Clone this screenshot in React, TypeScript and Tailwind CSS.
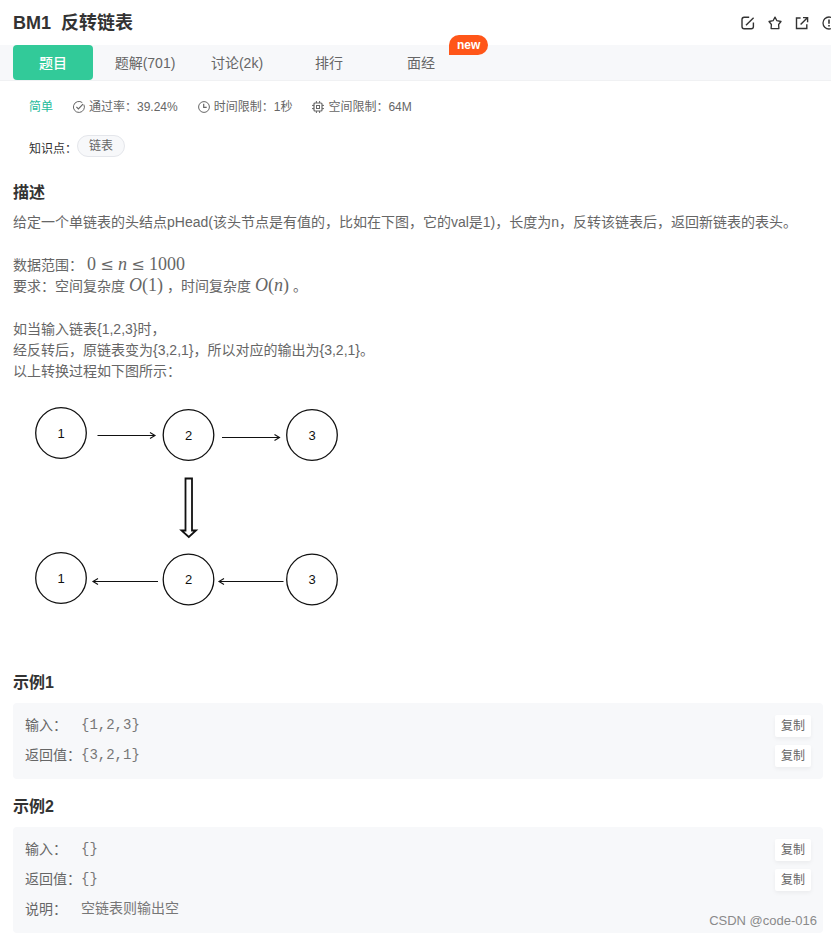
import React from "react";

interface Tab {
  label: string;
  active?: boolean;
  badge?: string;
}

interface ExampleRow {
  label: string;
  value: string;
  copy?: boolean;
}

const tabs: Tab[] = [
  { label: "题目", active: true },
  { label: "题解(701)" },
  { label: "讨论(2k)" },
  { label: "排行" },
  { label: "面经", badge: "new" },
];

const examples: { title: string; rows: ExampleRow[] }[] = [
  {
    title: "示例1",
    rows: [
      { label: "输入：", value: "{1,2,3}", copy: true },
      { label: "返回值：", value: "{3,2,1}", copy: true },
    ],
  },
  {
    title: "示例2",
    rows: [
      { label: "输入：", value: "{}", copy: true },
      { label: "返回值：", value: "{}", copy: true },
      { label: "说明：", value: "空链表则输出空" },
    ],
  },
];

const EditIcon = () => (
  <svg viewBox="0 0 14 14" className="size-3.5" fill="none" stroke="currentColor" strokeWidth="1.4">
    <path d="M8.2 1.3H3.2Q1 1.3 1 3.5v7Q1 12.7 3.2 12.7h7Q12.4 12.7 12.4 10.5V6.4" />
    <path d="M5 9.2 12.6 1.8" />
  </svg>
);

const StarIcon = () => (
  <svg viewBox="0 0 14 14" className="size-3.5" fill="none" stroke="currentColor" strokeWidth="1.3" strokeLinejoin="round">
    <path d="m7 1.1 1.9 3.6 4.1.8-2.4 3 .3 4.1H3.100l.3-4.100L1 5.500l4.100-.8z" />
  </svg>
);

const ShareIcon = () => (
  <svg viewBox="0 0 14 14" className="size-3.5" fill="none" stroke="currentColor" strokeWidth="1.4">
    <path d="M5.6 2H1.5v10.5h10.3V8.3" />
    <path d="M8 1.6h4.6v4.6M12.4 1.8 5.6 8.6" />
  </svg>
);

const AlertIcon = () => (
  <svg viewBox="0 0 14 14" className="size-3.5" fill="none" stroke="currentColor" strokeWidth="1.3">
    <circle cx="7" cy="7" r="6" />
    <path d="M7 3.4v4.4M7 9v1.5" strokeWidth="1.6" />
  </svg>
);

const CheckIcon = () => (
  <svg viewBox="0 0 12 12" className="size-3" fill="none" stroke="currentColor">
    <path d="M10.9 3.6A5.5 5.5 0 1 1 9.3 1.6" />
    <path d="m3.4 5.8 2 2L10 3.1" strokeWidth="1.2" />
  </svg>
);

const ClockIcon = () => (
  <svg viewBox="0 0 12 12" className="size-3" fill="none" stroke="currentColor">
    <circle cx="6" cy="6" r="5.4" />
    <path d="M5.7 2.8v3.6h3" strokeWidth="1.2" />
  </svg>
);

const ChipIcon = () => (
  <svg viewBox="0 0 12 12" className="size-3" fill="none" stroke="currentColor">
    <rect x="2" y="2" width="8" height="8" rx="1" strokeWidth="1.2" />
    <rect x="4.5" y="4.5" width="3" height="3" />
    <path d="M4.4 0v2M7.6 0v2M4.4 10v2M7.6 10v2M0 4.4h2M0 7.6h2M10 4.4h2M10 7.6h2" />
  </svg>
);

const nodes = [
  { x: 48, y: 51, n: 1 },
  { x: 175.5, y: 53, n: 2 },
  { x: 299, y: 53, n: 3 },
  { x: 48, y: 196, n: 1 },
  { x: 175.5, y: 197.5, n: 2 },
  { x: 299, y: 197.5, n: 3 },
];

const ListDiagram = () => (
  <svg width="340" height="273" viewBox="0 0 340 273" fill="none" stroke="#111" strokeWidth="1.3" className="block max-w-full" role="img">
    {nodes.map(({ x, y, n }, i) => (
      <g key={i}>
        <circle cx={x} cy={y} r="25.3" />
        <text x={x} y={y + 4.5} textAnchor="middle" fontSize="13" fill="#111" stroke="none">
          {n}
        </text>
      </g>
    ))}
    <path d="M84.5 53.5h57M137 50.5l5 3-5 3" strokeWidth="1.1" />
    <path d="M209 55.5h57M261.5 52.5l5 3-5 3" strokeWidth="1.1" />
    <path d="M145 199.5H80M85 196.5l-5 3 5 3" strokeWidth="1.1" />
    <path d="M270.5 199.5H206M211 196.5l-5 3 5 3" strokeWidth="1.1" />
    <path d="M172.500 96.500h6.500v52h4l-7.200 6.500-7.300-6.500h4z" strokeWidth="1.8" />
  </svg>
);

const Rel = () => (
  <span className="inline-block w-[22px] text-center font-['DejaVu_Serif',serif] text-base leading-none">≤</span>
);

const MathText: React.FC<{ children: React.ReactNode }> = ({ children }) => (
  <span className="mx-1 font-['Liberation_Serif',serif] text-lg leading-none">{children}</span>
);

const Header = () => (
  <header className="flex h-[45px] items-center overflow-hidden pl-[13px] text-[#333]">
    <h1 className="flex gap-2.5 text-lg font-bold">
      <span>BM1</span>
      <span>反转链表</span>
    </h1>
    <div className="-mr-[5px] ml-auto flex shrink-0 gap-[13px]">
      <button type="button" aria-label="笔记"><EditIcon /></button>
      <button type="button" aria-label="收藏"><StarIcon /></button>
      <button type="button" aria-label="分享"><ShareIcon /></button>
      <button type="button" aria-label="反馈"><AlertIcon /></button>
    </div>
  </header>
);

const TabBar = () => (
  <nav className="flex gap-3 border-b border-[#f0f1f3] bg-[#f7f8fa] px-[13px]">
    {tabs.map((tab) => (
      <button
        key={tab.label}
        type="button"
        className={
          tab.active
            ? "h-[35px] w-20 rounded bg-[#32ca99] text-sm font-medium text-white"
            : "relative h-[35px] w-20 text-sm text-[#666]"
        }
      >
        {tab.label}
        {tab.badge && (
          <span className="absolute -top-2.5 left-[68px] h-5 rounded-[10px] rounded-bl-none bg-[#ff5619] px-2 text-xs leading-5 font-bold text-white">
            {tab.badge}
          </span>
        )}
      </button>
    ))}
  </nav>
);

const ProblemInfo = () => (
  <div className="px-[29px] pt-[18px] text-xs text-[#666]">
    <ul className="flex flex-wrap items-center gap-5">
      <li className="text-[#25bb9b]">简单</li>
      <li className="flex items-center gap-1">
        <CheckIcon />
        通过率：39.24%
      </li>
      <li className="flex items-center gap-1">
        <ClockIcon />
        时间限制：1秒
      </li>
      <li className="flex items-center gap-1">
        <ChipIcon />
        空间限制：64M
      </li>
    </ul>
    <div className="mt-5 flex items-end">
      <span className="text-[#333]">知识点：</span>
      <a href="#list" className="h-[22px] rounded-full border border-[#e4e6eb] bg-[#f7f8fa] px-[11px] leading-5">
        链表
      </a>
    </div>
  </div>
);

const Example: React.FC<{ title: string; rows: ExampleRow[] }> = ({ title, rows }) => (
  <section>
    <h2 className="mt-4 mb-2 text-base font-bold text-[#333]">{title}</h2>
    <div className="flex flex-col gap-2 rounded bg-[#f7f8fa] p-3">
      {rows.map((row) => (
        <div key={row.label} className="flex h-[22px] items-start leading-5">
          <span className="w-14 shrink-0">{row.label}</span>
          <span className="font-['Liberation_Mono','Noto_Sans_CJK_SC',monospace] text-[#777]">{row.value}</span>
          {row.copy && (
            <button type="button" className="ml-auto h-[22px] w-9 rounded-xs bg-white text-xs shadow-[0_2px_4px_#0000000d]">
              复制
            </button>
          )}
        </div>
      ))}
    </div>
  </section>
);

const App: React.FC = () => {
  return (
    <div lang="zh-CN" className="relative bg-white pb-1 font-['Liberation_Sans','Noto_Sans_CJK_SC',sans-serif] text-sm text-[#666]">
      <Header />
      <TabBar />
      <ProblemInfo />
      <main className="pr-2 pl-[13px]">
        <h2 className="mt-6 mb-[7px] text-base font-bold text-[#333]">描述</h2>
        <div className="space-y-[22px] leading-[21px]">
          <p>给定一个单链表的头结点pHead(该头节点是有值的，比如在下图，它的val是1)，长度为n，反转该链表后，返回新链表的表头。</p>
          <p>
            数据范围：
            <MathText>
              0<Rel /><i>n</i><Rel />1000
            </MathText>
            <br />
            要求：空间复杂度
            <MathText>
              <i>O</i>(1)
            </MathText>
            ，时间复杂度
            <MathText>
              <i>O</i>(<i>n</i>)
            </MathText>
            。
          </p>
          <p>
            如当输入链表{"{1,2,3}"}时，
            <br />
            经反转后，原链表变为{"{3,2,1}"}，所以对应的输出为{"{3,2,1}"}。
            <br />
            以上转换过程如下图所示：
          </p>
        </div>
        <ListDiagram />
        {examples.map((example) => (
          <Example key={example.title} {...example} />
        ))}
      </main>
      <span className="absolute right-3.5 bottom-1.5 text-[13px] text-[#8a8a8a]">CSDN @code-016</span>
    </div>
  );
};

export default App;
